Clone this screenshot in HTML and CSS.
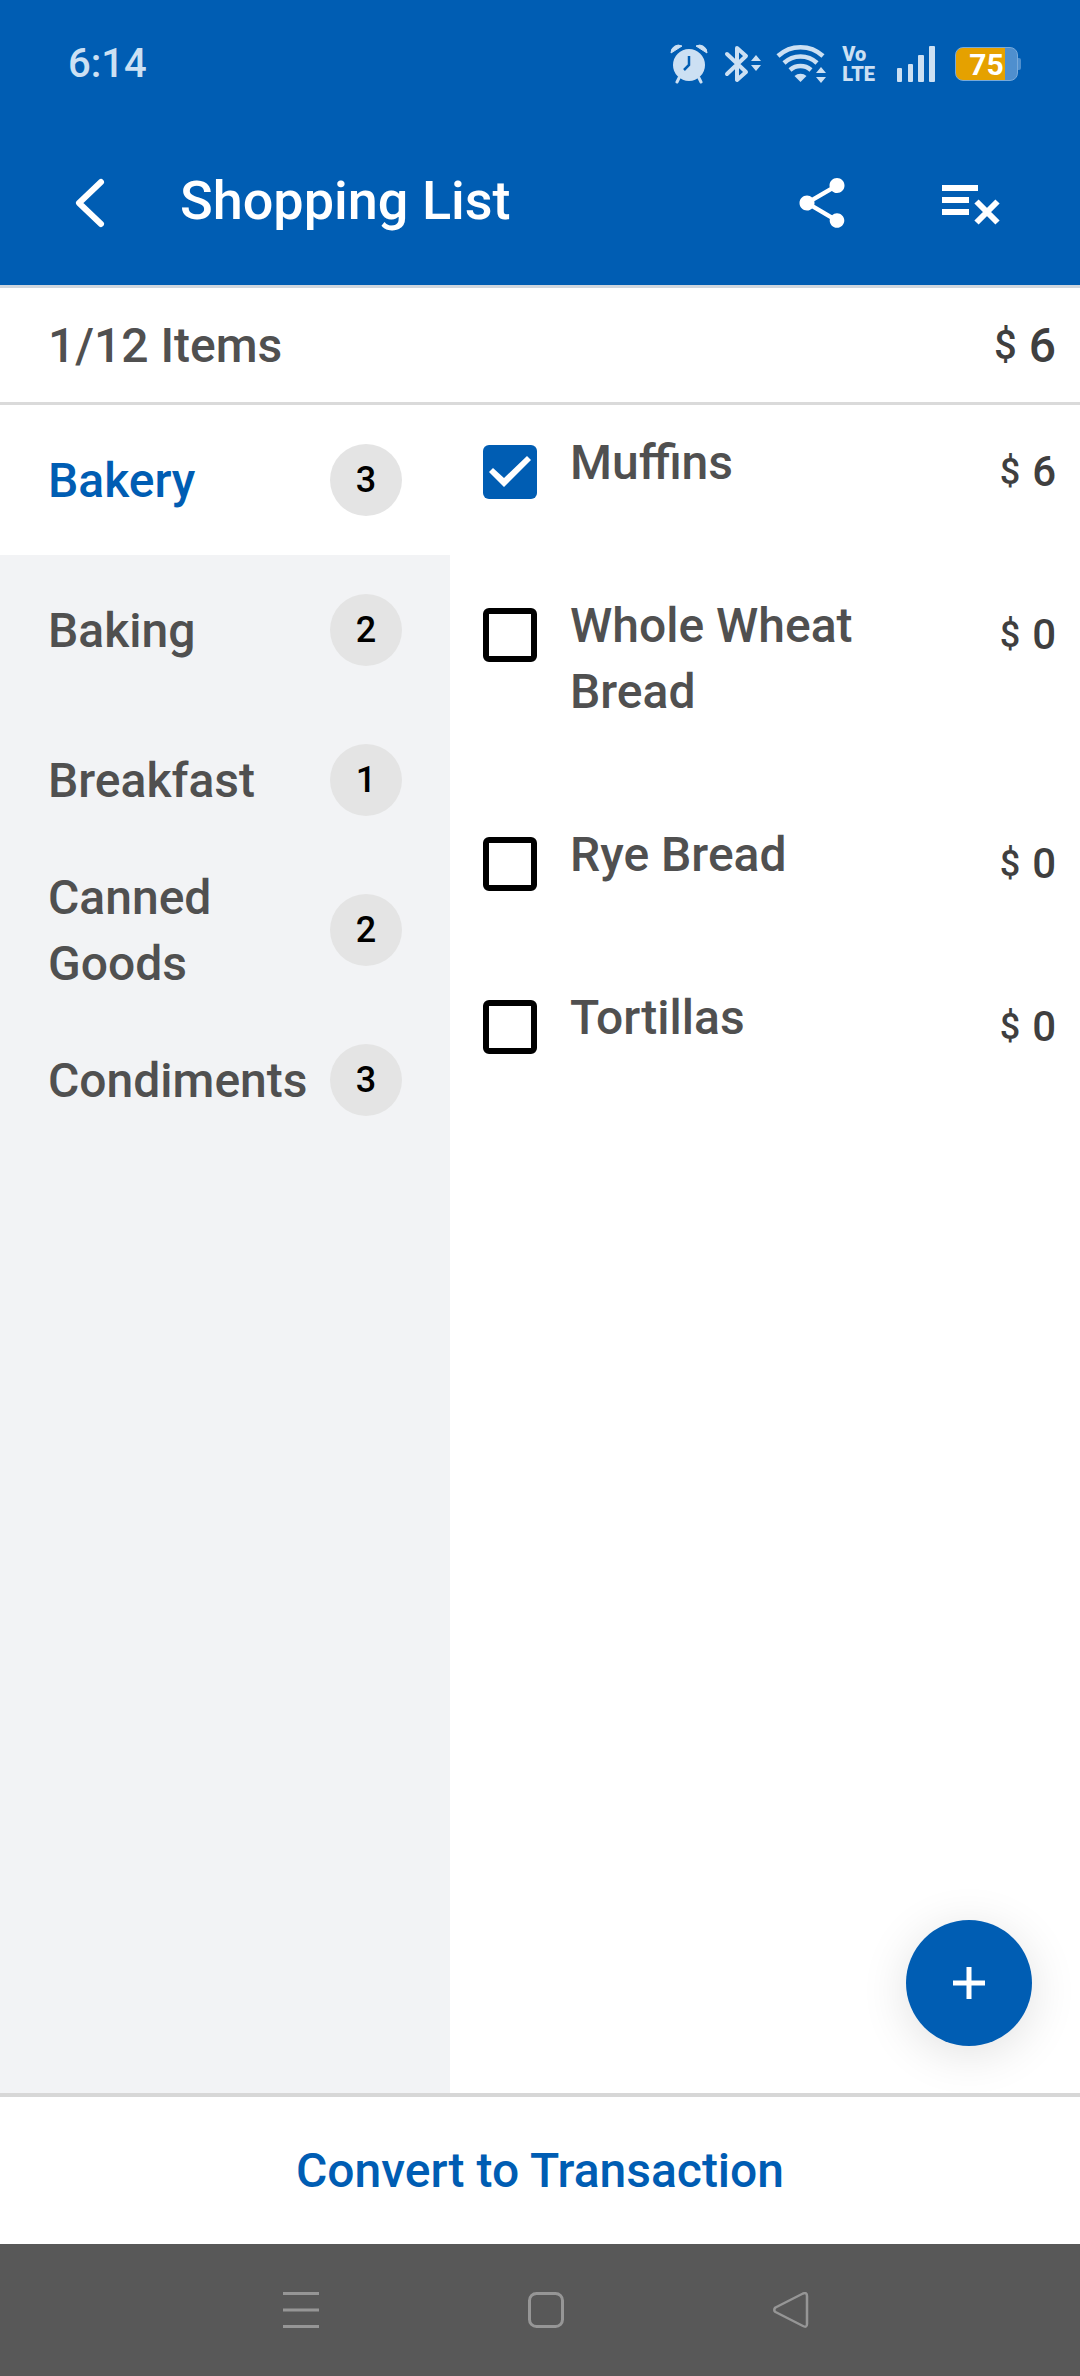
FILE: index.html
```html
<!DOCTYPE html>
<html lang="en">
<head>
<meta charset="utf-8">
<meta name="viewport" content="width=device-width, initial-scale=1">
<title>Shopping List</title>
<link rel="stylesheet" href="styles.css">
</head>
<body>
<div class="app">
  <header class="header">
    <div class="status">
      <time class="clock">6:14</time>
      <div class="indicators">
        <svg class="ind-alarm" width="38" height="40" viewBox="0 0 38 40" aria-hidden="true">
          <circle cx="19" cy="21" r="16" fill="currentColor"/>
          <path d="M1 9a7.500 7.500 0 0 1 11-7zM37 9A7.500 7.500 0 0 0 26 2z" fill="currentColor" stroke="currentColor" stroke-linejoin="round"/>
          <path d="M9 34l-2 4M29 34l2 4" stroke="currentColor" stroke-width="3" stroke-linecap="round"/>
          <path d="M19 12v9l-5 5" fill="none" stroke="#005db3" stroke-width="2.500"/>
        </svg>
        <svg class="ind-bluetooth" width="38" height="40" viewBox="0 0 38 40" aria-hidden="true">
          <path d="M3 10l19 18-9 8V4l9 8L3 30" fill="none" stroke="currentColor" stroke-width="4" stroke-linejoin="round" stroke-linecap="round"/>
          <path d="M27 17l5-6 5 6zM27 21h10l-5 6z" fill="currentColor"/>
        </svg>
        <svg class="ind-wifi" width="52" height="40" viewBox="0 0 52 40" aria-hidden="true">
          <g fill="none" stroke="currentColor" stroke-width="4.500">
            <path d="M2 12a33 33 0 0 1 45 0"/><path d="M8 19a24 24 0 0 1 33 0"/><path d="M14 26a16 16 0 0 1 21 0"/>
          </g>
          <path d="M18.500 32a9 9 0 0 1 12 0l-6 6z" fill="currentColor"/>
          <path d="M40 29l5-6 5 6zM40 33h10l-5 6z" fill="currentColor"/>
        </svg>
        <span class="volte"><span>Vo</span><span>LTE</span></span>
        <svg class="ind-signal" width="38" height="36" viewBox="0 0 38 36" aria-hidden="true">
          <g fill="currentColor"><rect y="22" width="5" height="14" rx="1"/><rect x="11" y="18" width="5" height="18" rx="1"/><rect x="21" y="9" width="6" height="27" rx="1"/><rect x="32" width="6" height="36" rx="1"/></g>
        </svg>
        <span class="battery"><span class="battery-level">75</span></span>
      </div>
    </div>
    <div class="toolbar">
      <button class="icon-button" type="button" aria-label="Back">
        <svg width="60" height="60" viewBox="0 0 60 60" aria-hidden="true"><path d="M41 9L19 30l22 21" fill="none" stroke="currentColor" stroke-width="6" stroke-linecap="round" stroke-linejoin="round"/></svg>
      </button>
      <h1 class="title">Shopping List</h1>
      <button class="icon-button" type="button" aria-label="Share">
        <svg width="60" height="60" viewBox="0 0 24 24" aria-hidden="true"><path fill="currentColor" d="M18 16.080c-.76 0-1.440.3-1.960.77L8.910 12.700c.05-.23.09-.46.09-.7s-.04-.47-.09-.7l7.050-4.110c.54.5 1.250.81 2.040.81 1.660 0 3-1.340 3-3s-1.340-3-3-3-3 1.340-3 3c0 .24.04.47.09.7L8.040 9.810C7.500 9.310 6.790 9 6 9c-1.660 0-3 1.340-3 3s1.340 3 3 3c.79 0 1.500-.31 2.040-.81l7.120 4.160c-.05.21-.08.43-.08.65 0 1.610 1.310 2.920 2.920 2.920s2.920-1.310 2.920-2.920-1.310-2.920-2.920-2.920z"/></svg>
      </button>
      <button class="icon-button" type="button" aria-label="Clear list">
        <svg width="60" height="60" viewBox="0 0 60 60" aria-hidden="true"><g fill="currentColor"><path d="M0 12h36v6H0zM0 24h27v6H0zM0 36h27v6H0z"/></g><path d="M34.500 28.500l21 21M55.500 28.500l-21 21" stroke="currentColor" stroke-width="6"/></svg>
      </button>
    </div>
  </header>

  <section class="summary">
    <span class="summary-count">1/12 Items</span>
    <span class="price price-total"><span class="currency">$</span>6</span>
  </section>

  <main class="content">
    <nav class="categories" aria-label="Categories">
      <button class="category category-active" type="button"><span class="category-name">Bakery</span><span class="badge">3</span></button>
      <button class="category" type="button"><span class="category-name">Baking</span><span class="badge">2</span></button>
      <button class="category" type="button"><span class="category-name">Breakfast</span><span class="badge">1</span></button>
      <button class="category" type="button"><span class="category-name">Canned Goods</span><span class="badge">2</span></button>
      <button class="category" type="button"><span class="category-name">Condiments</span><span class="badge">3</span></button>
    </nav>
    <section class="items">
      <ul class="item-list">
        <li class="item"><input class="check" type="checkbox" id="muffins" checked><label for="muffins">Muffins</label><span class="price"><span class="currency">$</span>6</span></li>
        <li class="item"><input class="check" type="checkbox" id="wheat"><label for="wheat">Whole Wheat Bread</label><span class="price"><span class="currency">$</span>0</span></li>
        <li class="item"><input class="check" type="checkbox" id="rye"><label for="rye">Rye Bread</label><span class="price"><span class="currency">$</span>0</span></li>
        <li class="item"><input class="check" type="checkbox" id="tortillas"><label for="tortillas">Tortillas</label><span class="price"><span class="currency">$</span>0</span></li>
      </ul>
      <button class="fab" type="button" aria-label="Add item">
        <svg width="32" height="32" viewBox="0 0 32 32" aria-hidden="true"><path d="M0 16h32M16 0v32" stroke="currentColor" stroke-width="5"/></svg>
      </button>
    </section>
  </main>

  <button class="convert" type="button">Convert to Transaction</button>

  <nav class="system-nav" aria-label="System">
    <button class="system-button" type="button" aria-label="Recent apps">
      <svg width="36" height="36" viewBox="0 0 36 36" aria-hidden="true"><path d="M0 1.500h36M0 18h36M0 34.500h36" stroke="currentColor" stroke-width="3"/></svg>
    </button>
    <button class="system-button" type="button" aria-label="Home">
      <svg width="36" height="36" viewBox="0 0 36 36" aria-hidden="true"><rect x="1.500" y="1.500" width="33" height="33" rx="7" fill="none" stroke="currentColor" stroke-width="3"/></svg>
    </button>
    <button class="system-button" type="button" aria-label="Back">
      <svg width="36" height="36" viewBox="0 0 36 36" aria-hidden="true"><path d="M2.500 15.500L30 1.500Q34 0 34 4v28Q34 36 30 34L2.500 20Q0 18 2.500 15.500z" fill="none" stroke="currentColor" stroke-width="2.500" stroke-linejoin="round"/></svg>
    </button>
  </nav>
</div>
</body>
</html>
```
FILE: styles.css
```css
* {
  box-sizing: border-box;
}

body {
  margin: 0;
  font-family: Roboto, "Liberation Sans", sans-serif;
  font-size: 48px;
  font-weight: 500;
  line-height: 66px;
  color: #505050;
  background: #fff;
}

button {
  margin: 0;
  padding: 0;
  border: 0;
  background: none;
  font: inherit;
  color: inherit;
  cursor: pointer;
}

svg {
  display: block;
  flex: none;
}

.app {
  display: flex;
  flex-direction: column;
  min-height: 100vh;
}

/* Header */

.header {
  border-bottom: 3px solid #cfd6de;
  background: #005db3;
  color: #fff;
}

.status {
  display: flex;
  align-items: center;
  justify-content: space-between;
  height: 120px;
  padding: 8px 62px 0 68px;
  color: #cce0f3;
}

.clock {
  font-size: 40px;
}

.indicators {
  display: flex;
  align-items: center;
}

.ind-alarm {
  margin-right: 16px;
}

.ind-bluetooth {
  margin-right: 14px;
}

.ind-wifi {
  margin-right: 14px;
}

.volte {
  display: flex;
  flex-direction: column;
  margin-right: 22px;
  font-size: 20px;
  font-weight: 900;
  line-height: 20px;
}

.ind-signal {
  margin-right: 20px;
}

.battery {
  position: relative;
  width: 63px;
  height: 34px;
  border: 1px solid #78aadb;
  border-radius: 8px;
  background: linear-gradient(to right, #e5a100 49px, #4f8fce 49px);
  color: #fff;
}

.battery::after {
  content: "";
  position: absolute;
  top: 10px;
  right: -4px;
  width: 3px;
  height: 12px;
  border-radius: 0 2px 2px 0;
  background: #4f8fce;
}

.battery-level {
  display: block;
  font-size: 30px;
  font-weight: 700;
  line-height: 34px;
  text-align: center;
}

.toolbar {
  display: flex;
  align-items: center;
  gap: 60px;
  height: 165px;
  padding: 0 78px 0 60px;
}

.icon-button {
  display: flex;
  width: 60px;
  height: 60px;
}

.icon-button:last-child {
  margin-left: 30px;
}

.title {
  flex: 1;
  margin: 0;
  padding-bottom: 4px;
  font-size: 54px;
  font-weight: 500;
}

/* Totals */

.summary {
  display: flex;
  align-items: center;
  justify-content: space-between;
  padding: 25px 24px 23px 48px;
  border-bottom: 3px solid #dadada;
}

.price {
  display: flex;
  align-items: center;
  justify-content: flex-end;
  gap: 12px;
  font-size: 42px;
  line-height: 54px;
  color: #3f3f3f;
}

.currency {
  font-size: 36px;
}

.price-total {
  font-size: 48px;
}

.price-total .currency {
  font-size: 40px;
}

/* Categories and items */

.content {
  display: flex;
  flex: 1;
}

.categories {
  flex: 0 0 450px;
  background: #f2f3f5;
}

.category {
  display: flex;
  align-items: center;
  justify-content: space-between;
  width: 100%;
  height: 150px;
  padding: 0 48px;
  text-align: left;
}

.category-active {
  background: #fff;
  color: #005db3;
}

.category-name {
  padding-top: 2px;
}

.badge {
  flex: none;
  width: 72px;
  height: 72px;
  border-radius: 50%;
  background: #e4e4e4;
  color: #000;
  font-size: 36px;
  line-height: 72px;
  text-align: center;
}

.items {
  position: relative;
  flex: 1;
}

.item-list {
  margin: 0;
  padding: 0;
  list-style: none;
}

.item {
  display: grid;
  grid-template-columns: 54px 1fr 120px;
  gap: 33px;
  align-items: start;
  padding: 25px 24px 69px 33px;
}

.item label {
  padding-bottom: 3px;
}

.item .price,
.check {
  margin: 15px 0 0;
}

.check {
  appearance: none;
  width: 54px;
  height: 54px;
  border: 6px solid #000;
  border-radius: 6px;
}

.check:checked {
  border: 0;
  background: #005db3;
}

.check:checked::before {
  content: "";
  display: block;
  height: 54px;
  background: #fff;
  clip-path: polygon(6px 27px, 10px 23px, 21px 33px, 44px 11px, 48px 15px, 21px 42px);
}

.fab {
  position: absolute;
  right: 48px;
  bottom: 47px;
  display: flex;
  align-items: center;
  justify-content: center;
  width: 126px;
  height: 126px;
  border-radius: 50%;
  background: #005db3;
  box-shadow: 0 8px 48px rgba(0, 0, 0, 0.12);
  color: #fff;
}

/* Bottom bars */

.convert {
  padding: 41px 48px 40px;
  border-top: 4px solid #d7d7d7;
  color: #005db3;
}

.system-nav {
  display: flex;
  align-items: center;
  justify-content: center;
  gap: 173px;
  height: 132px;
  padding-left: 12px;
  background: #585858;
  color: #969696;
}

.system-button {
  display: flex;
  align-items: center;
  justify-content: center;
  width: 72px;
  height: 72px;
}
```
